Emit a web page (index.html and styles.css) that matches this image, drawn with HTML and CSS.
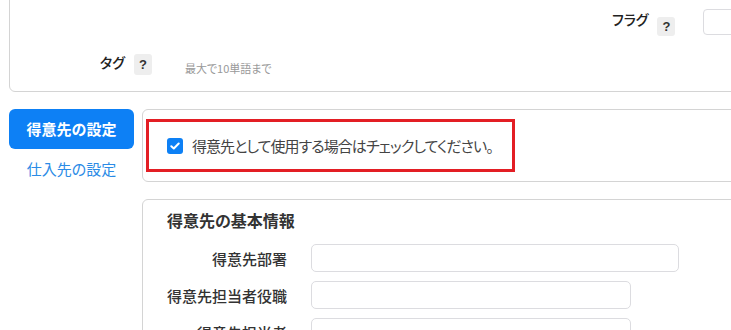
FILE: index.html
```html
<!DOCTYPE html>
<html lang="ja">

<head>
    <meta charset="UTF-8">
    <meta name="viewport" content="width=device-width, initial-scale=1.0">
    <title>得意先の設定</title>
    <link rel="stylesheet" href="styles.css">
</head>

<body>
    <div class="top-card">
        <div class="flag-row">
            <span class="field-label">フラグ</span>
            <span class="help flag-help">?</span>
            <span class="flag-input"></span>
        </div>
        <div class="tag-row">
            <span class="field-label">タグ</span>
            <span class="help tag-help">?</span>
            <span class="hint">最大で10単語まで</span>
        </div>
    </div>

    <div class="layout">
        <div class="sidebar">
            <a class="tab active">得意先の設定</a>
            <a class="tab">仕入先の設定</a>
        </div>

        <div class="content">
            <div class="card check-card">
                <div class="highlight">
                    <label class="check">
                        <span class="box">
                            <svg width="10" height="8" viewBox="0 0 10 8">
                                <path d="M1.3 4.2 L3.8 6.5 L8.7 1.5" fill="none" stroke="#fff" stroke-width="2" stroke-linecap="round" stroke-linejoin="round"/>
                            </svg>
                        </span>
                        得意先として使用する場合はチェックしてください。
                    </label>
                </div>
            </div>

            <div class="card info-card">
                <h3>得意先の基本情報</h3>
                <div class="form-row">
                    <label>得意先部署</label>
                    <input type="text" class="wide">
                </div>
                <div class="form-row">
                    <label>得意先担当者役職</label>
                    <input type="text">
                </div>
                <div class="form-row">
                    <label>得意先担当者</label>
                    <input type="text">
                </div>
                <div class="form-row">
                    <label>得意先メール</label>
                    <input type="text" class="wide">
                </div>
            </div>
        </div>
    </div>
</body>

</html>
```

FILE: styles.css
```css
body {
    margin: 0;
    font-family: "Noto Sans CJK JP", "Noto Sans", sans-serif;
    font-feature-settings: "palt";
    color: #333;
    background-color: #ffffff;
    overflow: hidden;
}

.top-card {
    box-sizing: border-box;
    width: 760px;
    height: 112px;
    margin: -20px 0 0 9px;
    padding-top: 28px;
    border: 1px solid #d4d4d4;
    border-radius: 6px;
}

.flag-row {
    display: flex;
    align-items: flex-start;
    height: 26px;
    padding-left: 602px;
}

.tag-row {
    display: flex;
    align-items: flex-start;
    margin-top: 17px;
    padding-left: 90px;
}

.field-label {
    font-size: 14px;
    line-height: 20px;
    font-weight: 500;
    color: #222;
}

.help {
    display: flex;
    align-items: center;
    justify-content: center;
    width: 18px;
    height: 19px;
    margin-left: 9px;
    background-color: #eeeeee;
    border-radius: 3px;
    font-family: "Liberation Sans", Arial, sans-serif;
    font-size: 13px;
    font-weight: bold;
    color: #333;
}

.flag-help {
    margin-top: 8px;
}

.tag-help {
    height: 21px;
    margin-top: 2px;
}

.flag-input {
    box-sizing: border-box;
    width: 40px;
    height: 26px;
    margin-left: 28px;
    border: 1px solid #dcdce0;
    border-radius: 4px;
}

.hint {
    margin: 8px 0 0 33px;
    font-size: 11px;
    line-height: 16px;
    color: #999;
}

.layout {
    display: flex;
    gap: 8px;
    margin: 17px 0 0 9px;
}

.sidebar {
    display: flex;
    flex-direction: column;
    width: 125px;
    flex-shrink: 0;
}

.tab {
    font-size: 15px;
    line-height: 20px;
    text-align: center;
    color: #2b8be6;
    cursor: pointer;
}

.tab.active {
    height: 40px;
    line-height: 40px;
    margin-bottom: 10px;
    background-color: #0d80f5;
    border-radius: 6px;
    color: white;
    font-weight: bold;
}

.content {
    width: 640px;
    flex-shrink: 0;
}

.card {
    box-sizing: border-box;
    border: 1px solid #d4d4d4;
    border-radius: 6px;
}

.check-card {
    height: 73px;
    padding: 9px 0 0 3px;
}

.highlight {
    box-sizing: border-box;
    display: inline-flex;
    align-items: center;
    height: 53px;
    padding: 0 19px 0 18px;
    border: 3px solid #e31e24;
}

.check {
    display: flex;
    align-items: center;
    gap: 9px;
    font-size: 15px;
    line-height: 22px;
    letter-spacing: -0.95px;
    color: #444;
}

.box {
    display: flex;
    align-items: center;
    justify-content: center;
    width: 16px;
    height: 16px;
    background-color: #0d80f5;
    border-radius: 3px;
}

.info-card {
    margin-top: 17px;
    padding: 9px 24px 20px;
}

.info-card h3 {
    margin: 0 0 13px;
    font-size: 16px;
    line-height: 22px;
    font-weight: bold;
}

.form-row {
    display: flex;
    align-items: center;
    gap: 24px;
    margin-bottom: 9px;
}

.form-row label {
    width: 120px;
    text-align: right;
    font-size: 15px;
    font-weight: 500;
}

.form-row input {
    box-sizing: border-box;
    width: 320px;
    height: 28px;
    border: 1px solid #dcdce0;
    border-radius: 5px;
}

.form-row input.wide {
    width: 368px;
}
```
